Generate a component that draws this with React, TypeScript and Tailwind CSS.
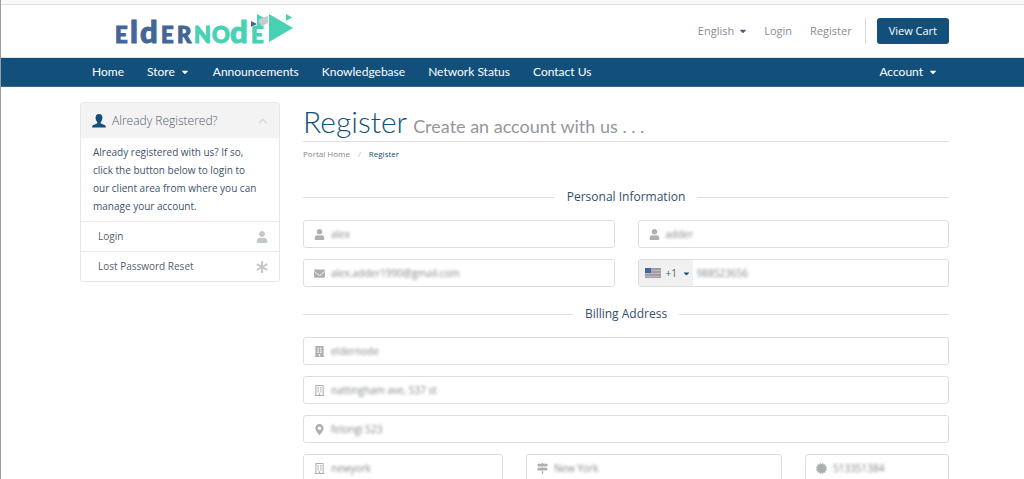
import type { ReactNode } from "react";
import {
  FaAsterisk,
  FaBuilding,
  FaCaretDown,
  FaCertificate,
  FaChevronUp,
  FaEnvelope,
  FaMapMarkerAlt,
  FaMapSigns,
  FaRegBuilding,
  FaUser,
} from "react-icons/fa";

function Logo() {
  return (
    <svg viewBox="0 0 182 38" className="h-[38px] w-[182px] overflow-visible" role="img" aria-label="Eldernode">
      <g fontFamily="Lato, sans-serif" fontWeight="900" fill="#436696" stroke="#436696" strokeWidth="1">
        <text y="33" x="1" fontSize="22">E</text>
        <text y="33" x="16" fontSize="31">l</text>
        <text y="33" x="26" fontSize="31">d</text>
        <text y="33" x="47" fontSize="22">E</text>
        <text y="33" x="63" fontSize="22">R</text>
      </g>
      <g fontFamily="Lato, sans-serif" fontWeight="900" fill="#48d1b2" stroke="#48d1b2" strokeWidth="1">
        <text y="33" x="80" fontSize="22">N</text>
        <text y="33" x="98" fontSize="22">O</text>
        <text y="33" x="116" fontSize="31">d</text>
        <text y="33" x="137" fontSize="22">E</text>
      </g>
      <path d="M155 4v28l24-14z" fill="#48d1b2" />
      <path d="M172 4v7l6-3.500z" fill="#48d1b2" />
      <path d="M143 4v8l7-4zM143 11v7l8-5z" fill="#48d1b2" />
      <path d="M145 9l9-3v7l-6 3-3-3z" fill="#c6cbd0" />
      <path d="M136 10v8l8-4z" fill="#fff" />
      <path d="M137 11v6l6-3z" fill="#436696" />
    </svg>
  );
}

function PersonIcon() {
  return (
    <svg viewBox="0 0 14 14" className="size-[14px]" fill="#12507b" aria-hidden="true">
      <path d="M7 0C4.700 0 3.600 1.500 3.600 3.700c0 1.900.7 3.400 1.700 4.300v1.200C4.800 10 1 10.500.4 12L0 13.500h14l-.4-1.500C13 10.500 9.200 10 8.700 9.200V8c1-.9 1.700-2.400 1.700-4.300C10.400 1.500 9.300 0 7 0z" />
    </svg>
  );
}

function UsFlag() {
  return (
    <svg viewBox="0 0 16 10" className="h-[10px] w-4" aria-hidden="true">
      <rect width="16" height="10" fill="#a29ba6" />
      <path d="M0 2.500h16M0 5.500h16M0 8.500h16" stroke="#bcb8c0" strokeWidth="1" />
      <rect width="6" height="5" fill="#43659a" />
    </svg>
  );
}

type FieldProps = {
  label: string;
  value: string;
  icon?: ReactNode;
  prefix?: ReactNode;
  type?: string;
};

function Field({ label, value, icon, prefix, type = "text" }: FieldProps) {
  return (
    <div className="flex h-7 min-w-0 items-center rounded-[3px] border border-[#dcdedf] bg-white">
      {prefix}
      {icon && (
        <span className="flex w-[27px] shrink-0 justify-end pr-[6px] text-[11px] text-[#abb0b3]">{icon}</span>
      )}
      <input
        type={type}
        aria-label={label}
        defaultValue={value}
        className="min-w-0 flex-1 text-[10px] leading-5 text-[#7f878b] blur-[1.500px] outline-none"
      />
    </div>
  );
}

function SectionTitle({ children }: { children: ReactNode }) {
  return (
    <h2 className="flex h-5 items-center gap-3 text-[12px] text-[#30506e] before:h-px before:flex-1 before:bg-[#dedfe0] after:h-px after:flex-1 after:bg-[#dedfe0]">
      {children}
    </h2>
  );
}

const navLinks = ["Announcements", "Knowledgebase", "Network Status", "Contact Us"];

export default function App() {
  return (
    <div className="min-h-screen border-l border-[#9a9ba3] bg-white font-['Open_Sans',sans-serif] text-[10px] text-[#56616d]">
      <div className="h-[5px] border-b border-[#dfdfe1] bg-[#f8f8f8]" />
      <header className="flex h-[53px] items-center justify-between border-b border-[#dde1e4] pr-[75px] pl-[113px]">
        <a href="#home" className="mb-1">
          <Logo />
        </a>
        <div className="flex items-center text-[11px] text-[#878d96]">
          <button type="button" className="flex items-center gap-1">
            English <FaCaretDown className="text-[10px] text-[#45617f]" />
          </button>
          <a href="#login" className="ml-4">Login</a>
          <a href="#register" className="ml-[18px]">Register</a>
          <span className="mr-[11px] ml-[13px] h-[26px] w-px bg-[#d8dadc]" />
          <button type="button" className="h-[26px] rounded-[3px] bg-[#12507b] px-3 text-white">
            View Cart
          </button>
        </div>
      </header>

      <nav className="flex h-[29px] items-center gap-[23px] border-b border-[#3b6590] bg-[#12507b] pr-[86px] pl-[91px] font-['Lato',sans-serif] text-[12px] text-white">
        <a href="#home">Home</a>
        <button type="button" className="flex items-center gap-[5px]">
          Store <FaCaretDown className="text-[10px]" />
        </button>
        {navLinks.map((label) => (
          <a key={label} href="#nav">{label}</a>
        ))}
        <button type="button" className="ml-auto flex items-center gap-[5px]">
          Account <FaCaretDown className="text-[10px]" />
        </button>
      </nav>

      <div className="grid grid-cols-[200px_minmax(0,1fr)] items-start gap-[23px] pt-[15px] pr-[75px] pl-[79px]">
        <aside className="overflow-hidden rounded-[3px] border border-[#e6e7e8]">
          <h2 className="flex h-[35px] items-center gap-[6px] bg-[#f3f3f3] px-[11px] text-[12px] font-light text-[#55616e]">
            <PersonIcon />
            Already Registered?
            <FaChevronUp className="ml-auto text-[10px] text-[#d9dbdc]" />
          </h2>
          <p className="pt-[5px] pr-5 pb-[6px] pl-3 leading-[18px] text-[#40526a]">
            Already registered with us? If so, click the button below to login to our client area from where you can
            manage your account.
          </p>
          <a href="#login" className="flex h-[30px] items-center justify-between border-t border-[#ebeced] pr-[11px] pl-[17px]">
            Login <FaUser className="text-[12px] text-[#c2c7c9]" />
          </a>
          <a href="#reset" className="flex h-[30px] items-center justify-between border-t border-[#ebeced] pr-[11px] pl-[17px]">
            Lost Password Reset <FaAsterisk className="text-[12px] text-[#c2c7c9]" />
          </a>
        </aside>

        <main>
          <h1 className="flex h-10 items-baseline gap-[6px] border-b border-[#dedfe0] font-['Lato',sans-serif] text-[30px] leading-[38px] font-light text-[#12507b]">
            Register
            <small className="text-[18px] font-normal text-[#94969c]">Create an account with us . . .</small>
          </h1>
          <ol className="flex h-6 items-center text-[8px] text-[#81868d]">
            <li><a href="#home">Portal Home</a></li>
            <li className="px-2 text-[#bbbec2]">/</li>
            <li className="text-[#12507b]">Register</li>
          </ol>

          <form className="pt-[21px]">
            <SectionTitle>Personal Information</SectionTitle>
            <div className="mt-[13px] grid grid-cols-2 gap-x-[23px] gap-y-[11px]">
              <Field label="First Name" value="alex" icon={<FaUser />} />
              <Field label="Last Name" value="adder" icon={<FaUser />} />
              <Field label="Email Address" value="alex.adder1990@gmail.com" icon={<FaEnvelope />} type="email" />
              <Field
                label="Phone Number"
                value="988523656"
                type="tel"
                prefix={
                  <button
                    type="button"
                    aria-label="Country code"
                    className="mr-1 flex h-full w-[54px] shrink-0 items-center gap-[5px] bg-[#f0f0f1] pl-[6px] text-[#55606c]"
                  >
                    <UsFlag /> +1 <FaCaretDown className="text-[9px] text-[#12507b]" />
                  </button>
                }
              />
            </div>

            <div className="pt-[17px]">
              <SectionTitle>Billing Address</SectionTitle>
            </div>
            <div className="mt-[13px] grid gap-[11px]">
              <Field label="Company Name" value="eldernode" icon={<FaBuilding />} />
              <Field label="Street Address" value="nattingham ave, 537 st" icon={<FaRegBuilding />} />
              <Field label="Street Address 2" value="felongi 523" icon={<FaMapMarkerAlt />} />
              <div className="grid grid-cols-[200fr_256fr_144fr] gap-[23px]">
                <Field label="City" value="newyork" icon={<FaRegBuilding />} />
                <Field label="State" value="New York" icon={<FaMapSigns />} />
                <Field label="Postcode" value="513351384" icon={<FaCertificate />} />
              </div>
            </div>
          </form>
        </main>
      </div>
    </div>
  );
}
